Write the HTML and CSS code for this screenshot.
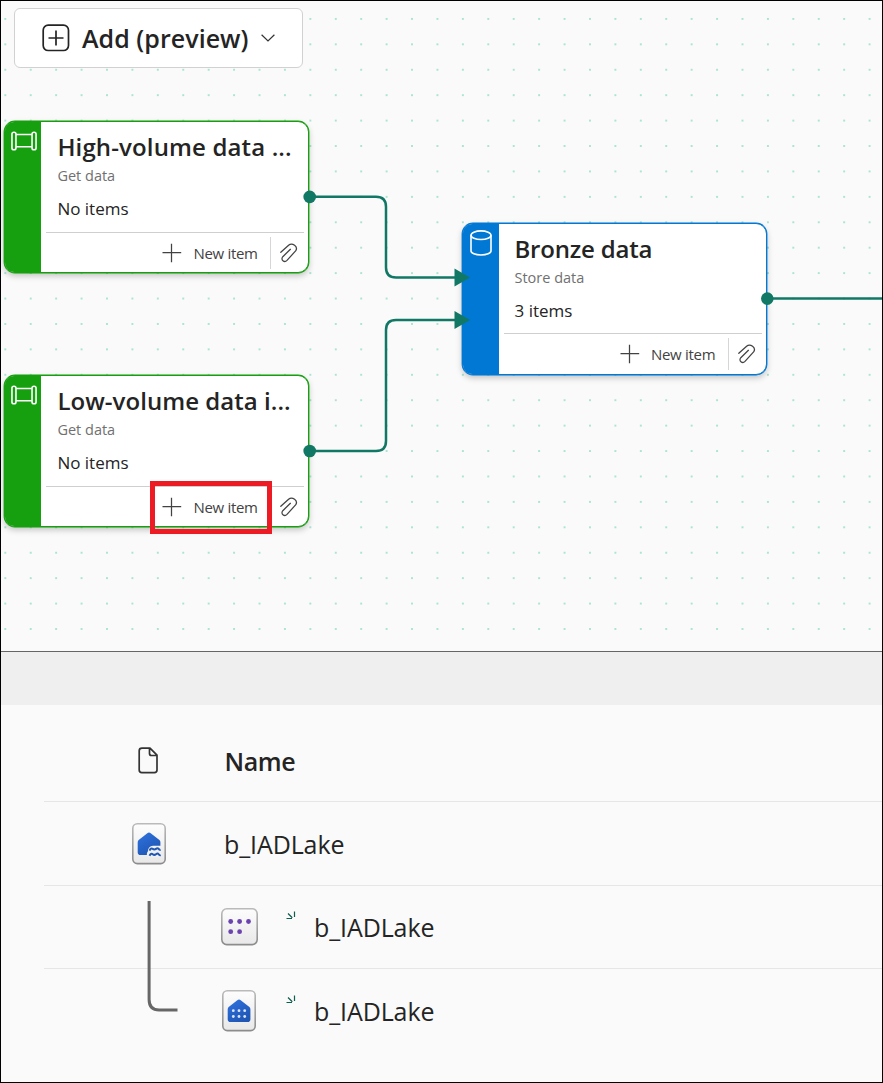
FILE: index.html
```html
<!DOCTYPE html>
<html lang="en">
<head>
<meta charset="utf-8">
<title>Task flow</title>
<link rel="stylesheet" href="styles.css">
</head>
<body>
<svg class="defs" width="0" height="0">
  <defs>
    <linearGradient id="tile" x1="0" y1="0" x2="0" y2="1"><stop offset="0" stop-color="#fdfdfd"/><stop offset="1" stop-color="#e8e8e8"/></linearGradient>
    <linearGradient id="edge" x1="0" y1="0" x2="0" y2="1"><stop offset="0" stop-color="#bababa"/><stop offset="1" stop-color="#8c8c8c"/></linearGradient>
    <linearGradient id="house" x1="0" y1="0" x2="0.6" y2="1"><stop offset="0" stop-color="#2f72e0"/><stop offset="1" stop-color="#1f57b4"/></linearGradient>
    <symbol id="plus" viewBox="0 0 20 20"><path d="M9.500.8v18.400M.500 9.500h18.700" fill="none" stroke="#424242" stroke-width="1.250"/></symbol>
    <symbol id="clip" viewBox="0 0 18 20"><path d="M.8 9.300 8.600 2.200C12.200-.8 18.600 3.600 15.600 7.900L7 17.400C4.400 20 .2 16.900 2.800 13.700L10.400 6.300" fill="none" stroke="#424242" stroke-width="1.250" stroke-linecap="round" stroke-linejoin="round"/></symbol>
    <symbol id="pipe" viewBox="0 0 26 20"><g fill="none" stroke="#fff" stroke-width="1.600"><rect x=".95" y="1.200" width="4" height="17.600" rx="1.900"/><rect x="21.050" y="1.200" width="4" height="17.600" rx="1.900"/><path d="M5 3.500h16M5 15.800h16"/></g></symbol>
    <symbol id="db" viewBox="0 0 22 26"><g fill="none" stroke="#fff" stroke-width="1.600"><ellipse cx="11" cy="5.200" rx="10" ry="4.300"/><path d="M1 5.200v15.500c0 2.500 4.300 4.300 10 4.300s10-1.800 10-4.300V5.200"/></g></symbol>
  </defs>
</svg>
<div class="window">
  <section class="canvas">
    <svg class="grid" width="881" height="650">
      <defs><pattern id="dots" x="-8.4" y="5.200" width="25.420" height="25.420" patternUnits="userSpaceOnUse"><circle cx="12.710" cy="12.710" r=".8" fill="#45cb9c"/></pattern></defs>
      <rect width="881" height="650" fill="url(#dots)"/>
    </svg>
    <button class="add">
      <svg class="add-icon" viewBox="0 0 28 28"><rect x="1.200" y="1.200" width="25.300" height="25.300" rx="5" fill="none" stroke="#242424" stroke-width="1.700"/><path d="M14 6.500v15M6.500 14h15" stroke="#242424" stroke-width="1.700"/></svg>
      <span class="add-label">Add (preview)</span>
      <svg class="chevron" viewBox="0 0 14 8"><path d="M.6.700 7 7 13.400.7" fill="none" stroke="#333" stroke-width="1.200"/></svg>
    </button>

    <article class="node get high">
      <div class="stripe"><svg class="pipe-icon"><use href="#pipe"/></svg></div>
      <div class="body">
        <div class="info"><h2><span class="t-high">High-volume data ...</span></h2><p class="kind">Get data</p><p class="count">No items</p></div>
        <div class="actions"><span class="new"><svg class="plus"><use href="#plus"/></svg><span class="new-label">New item</span></span><span class="attach"><svg><use href="#clip"/></svg></span></div>
      </div>
    </article>

    <article class="node get low">
      <div class="stripe"><svg class="pipe-icon"><use href="#pipe"/></svg></div>
      <div class="body">
        <div class="info"><h2><span class="t-low">Low-volume data i...</span></h2><p class="kind">Get data</p><p class="count">No items</p></div>
        <div class="actions"><span class="new"><svg class="plus"><use href="#plus"/></svg><span class="new-label">New item</span></span><span class="attach"><svg><use href="#clip"/></svg></span></div>
      </div>
      <div class="callout"></div>
    </article>

    <article class="node store bronze">
      <div class="stripe"><svg class="db-icon"><use href="#db"/></svg></div>
      <div class="body">
        <div class="info"><h2><span class="t-bronze">Bronze data</span></h2><p class="kind">Store data</p><p class="count">3 items</p></div>
        <div class="actions"><span class="new"><svg class="plus"><use href="#plus"/></svg><span class="new-label">New item</span></span><span class="attach"><svg><use href="#clip"/></svg></span></div>
      </div>
    </article>

    <svg class="links" width="881" height="650" viewBox="1 1 881 650">
      <g fill="none" stroke="#117865" stroke-width="2.500">
        <path d="M310 196.800h66q10 0 10 10v60.600q0 10 10 10h60"/>
        <path d="M310 450.900h66q10 0 10-10v-111q0-10 10-10h60"/>
        <path d="M767 298.500h116"/>
      </g>
      <g fill="#117865">
        <circle cx="309.700" cy="196.900" r="6.300"/><circle cx="309.700" cy="451" r="6.300"/><circle cx="767.300" cy="298.600" r="6.300"/>
        <path d="M454.500 268.400 470 277.400 454.500 286.400zM454.500 310.900 470 319.900 454.500 328.900z"/>
      </g>
    </svg>
  </section>
  <div class="splitter"></div>
  <section class="items">
    <div class="row head">
      <svg class="doc" viewBox="0 0 20 27"><path d="M4 1.200h8l7 7v14.800q0 2.600-2.600 2.600H3.800q-2.600 0-2.600-2.600V3.800Q1.200 1.200 4 1.200zM11.500 1.200v5.300q0 2 2 2H19" fill="none" stroke="#333" stroke-width="1.700" stroke-linejoin="round"/></svg>
      <span class="name-head">Name</span>
    </div>
    <div class="row parent">
      <svg class="tile" viewBox="0 0 34 42"><rect x=".8" y=".8" width="32.400" height="39.800" rx="4.500" fill="url(#tile)" stroke="url(#edge)" stroke-width="1.600"/><path d="M15.300 10.300q1.700-1.400 3.400 0l8.700 6.700q1 .8 1 2.200v10q0 2.800-2.800 2.800H8.500q-2.800 0-2.800-2.800v-10q0-1.400 1-2.200z" fill="url(#house)"/><path d="M16.500 34.500q-3-3-.7-6 .2-5 5.200-5.700h8v11.700z" fill="#f0f0f0"/><path d="M17.500 27.600q1.500-2.900 3.200-1.700t3.300 0 2.600 0 2 .7M17.500 32.800q1.600-2.900 3.200-1.600t3.300 0 2.600 0 2 .8" fill="none" stroke="#1f57b4" stroke-width="2"/></svg>
      <span class="item-name">b_IADLake</span>
    </div>
    <div class="row child">
      <svg class="tile-wide" viewBox="0 0 37 38"><rect x=".8" y=".8" width="35.400" height="35.800" rx="5" fill="url(#tile)" stroke="url(#edge)" stroke-width="1.600"/><g fill="#6b43ae"><circle cx="9.700" cy="13.500" r="2.400"/><circle cx="18.600" cy="13.500" r="2.400"/><circle cx="27.500" cy="13.500" r="2.400"/><circle cx="9.700" cy="23.700" r="2.400"/><circle cx="18.600" cy="23.700" r="2.400"/></g></svg>
      <svg class="spark" viewBox="0 0 10 10"><path d="M2 2.500 6.300 6.700M8.500.5V6M.5 7.500H6" stroke="#0c5e4e" stroke-width="1.200" fill="none"/></svg>
      <span class="item-name">b_IADLake</span>
    </div>
    <div class="row child last">
      <svg class="tile tile-last" viewBox="0 0 34 42"><rect x=".8" y=".8" width="32.400" height="39.800" rx="4.500" fill="url(#tile)" stroke="url(#edge)" stroke-width="1.600"/><path d="M15.300 10.300q1.700-1.400 3.400 0l8.700 6.700q1 .8 1 2.200v10q0 2.800-2.800 2.800H8.500q-2.800 0-2.800-2.800v-10q0-1.400 1-2.200z" fill="url(#house)"/><g fill="#dbe6fa"><circle cx="11.300" cy="20.700" r="1.400"/><circle cx="17" cy="20.700" r="1.400"/><circle cx="22.700" cy="20.700" r="1.400"/><circle cx="11.300" cy="26.500" r="1.400"/><circle cx="17" cy="26.500" r="1.400"/><circle cx="22.700" cy="26.500" r="1.400"/></g></svg>
      <svg class="spark" viewBox="0 0 10 10"><path d="M2 2.500 6.300 6.700M8.500.5V6M.5 7.500H6" stroke="#0c5e4e" stroke-width="1.200" fill="none"/></svg>
      <span class="item-name">b_IADLake</span>
    </div>
    <svg class="branch" width="32" height="112" viewBox="0 0 32 112"><path d="M2.100 0v98.500q0 10.500 10 10.500H30.500" fill="none" stroke="#666" stroke-width="3"/></svg>
  </section>
</div>
</body>
</html>
```
FILE: styles.css
```css
* { box-sizing: border-box; }
body { margin: 0; font-family: "Open Sans", "Noto Sans", sans-serif; color: #242424; }
.defs { position: absolute; }
svg { display: block; flex: none; }
.window { width: 883px; height: 1083px; border: 1px solid #000; background: #fafafa; overflow: hidden; }
.canvas { position: relative; height: 650px; padding: 7px 13px; overflow: hidden; }
.grid, .links { position: absolute; left: 0; top: 0; }
.add { position: relative; display: flex; align-items: center; width: 289px; height: 60px; padding: 0 0 0 27px; border: 1px solid #d1d1d1; border-radius: 6px; background: #fff; font: inherit; color: inherit; }
.add-icon { width: 28px; height: 28px; }
.add-label { width: 166px; margin: 0 13px 0 12px; text-align: left; font-size: 25px; font-weight: 600; letter-spacing: .05px; white-space: nowrap; }
.chevron { width: 14px; height: 8px; }
.node { position: absolute; display: flex; width: 305px; height: 152px; border: 1px solid; border-radius: 11px; background: #fff; }
.get { border-color: #16a00f; box-shadow: 0 0 0 .4px #16a00f, 0 3px 6px rgba(0,0,0,.22); }
.store { border-color: #0078d4; box-shadow: 0 0 0 .4px #0078d4, 0 3px 6px rgba(0,0,0,.22); }
.high { left: 3.400px; top: 120px; }
.low { left: 3.400px; top: 374px; }
.bronze { left: 461px; top: 222px; }
.stripe { width: 36px; flex: none; border-radius: 9px 0 0 9px; }
.get .stripe { background: #16a00f; }
.store .stripe { background: #0078d4; }
.pipe-icon { width: 26px; height: 20px; margin: 9px 0 0 5.500px; }
.db-icon { width: 22px; height: 26px; margin: 6px 0 0 7px; }
.body { flex: 1; display: flex; flex-direction: column; padding: 0 4px 0 5px; }
.info { height: 111px; padding-left: 11px; border-bottom: 1px solid #cfcfcf; }
.bronze .info { height: 110px; padding-left: 10.500px; }
h2, p { margin: 0; font-weight: 400; white-space: nowrap; }
h2 { padding-top: 8px; font-size: 24px; font-weight: 600; line-height: 34px; }
.t-high { letter-spacing: .14px; }
.t-low { letter-spacing: .05px; }
.t-bronze { letter-spacing: -.2px; }
.kind { margin-top: 2px; font-size: 14.500px; line-height: 20px; color: #707070; }
.count { margin-top: 11px; font-size: 17px; line-height: 24px; }
.actions { flex: 1; display: flex; align-items: center; justify-content: flex-end; font-size: 15px; color: #424242; }
.new { display: flex; align-items: center; }
.plus { width: 20px; height: 20px; }
.new-label { width: 65px; margin: 0 12px 0 11px; letter-spacing: -.3px; white-space: nowrap; }
.attach { height: 32px; width: 34px; padding: 6px 0 0 9px; border-left: 1px solid #d6d6d6; }
.attach svg { width: 18px; height: 20px; }
.callout { position: absolute; left: 144.600px; top: 105px; width: 122px; height: 53px; border: 5px solid #ed1c24; }
.splitter { height: 54px; border-top: 1px solid #666; background: #efefef; }
.items { position: relative; padding-left: 43px; }
.row { display: flex; align-items: center; height: 83.500px; border-bottom: 1px solid #e6e6e6; }
.head { height: 97px; padding: 15px 0 0 94px; }
.doc { width: 20px; height: 27px; margin-right: 66.500px; }
.name-head { font-size: 25px; font-weight: 600; letter-spacing: -.4px; padding-top: 1px; }
.item-name { font-size: 25px; padding-top: 2px; letter-spacing: -.1px; white-space: nowrap; }
.parent { padding: 1px 0 0 88px; }
.parent .item-name { padding-top: 1px; }
.tile { width: 34px; height: 42px; margin-right: 58px; }
.child { padding-left: 176.500px; }
.child .item-name { padding-top: 0; }
.last { border: 0; }
.tile-wide { width: 37px; height: 38px; margin-right: 28px; }
.tile-last { margin: 0 29px 0 1.500px; }
.last .spark { margin-left: .5px; }
.spark { width: 10px; height: 10px; margin: 0 18.500px 22px 0; }
.branch { position: absolute; left: 146px; top: 196px; }
```
